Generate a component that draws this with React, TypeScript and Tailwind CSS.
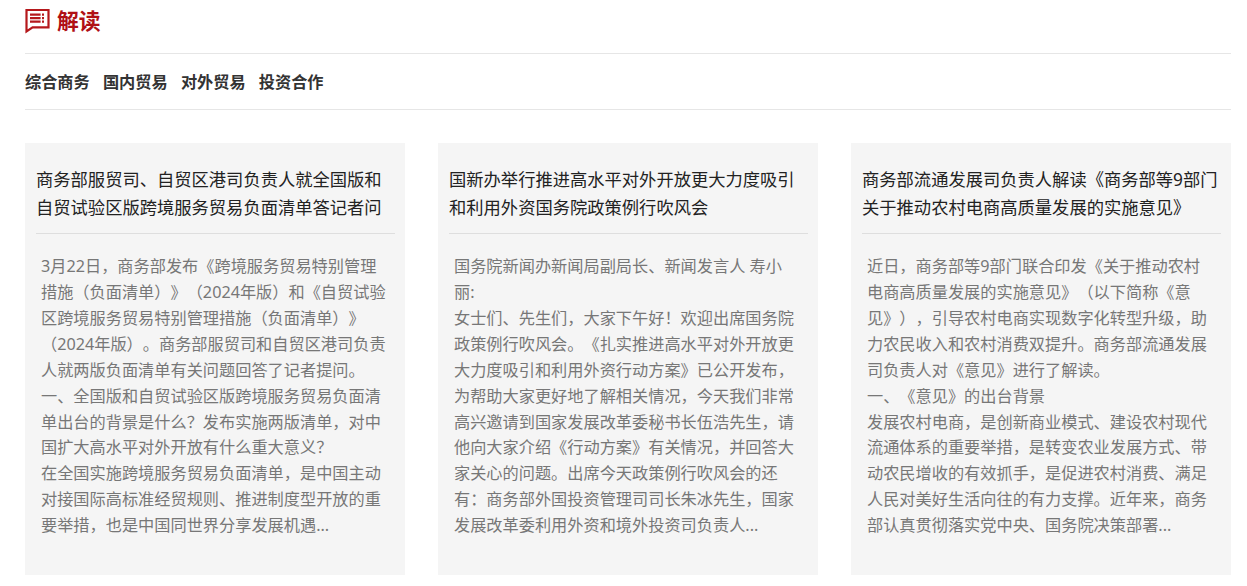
type Article = { title: string[]; lines: string[] };

const tabs = ['综合商务', '国内贸易', '对外贸易', '投资合作'];

const articles: Article[] = [
  {
    title: ['商务部服贸司、自贸区港司负责人就全国版和', '自贸试验区版跨境服务贸易负面清单答记者问'],
    lines: [
      '3月22日，商务部发布《跨境服务贸易特别管理',
      '措施（负面清单）》（2024年版）和《自贸试验',
      '区跨境服务贸易特别管理措施（负面清单）》',
      '（2024年版）。商务部服贸司和自贸区港司负责',
      '人就两版负面清单有关问题回答了记者提问。',
      '一、全国版和自贸试验区版跨境服务贸易负面清',
      '单出台的背景是什么？发布实施两版清单，对中',
      '国扩大高水平对外开放有什么重大意义？',
      '在全国实施跨境服务贸易负面清单，是中国主动',
      '对接国际高标准经贸规则、推进制度型开放的重',
      '要举措，也是中国同世界分享发展机遇...',
    ],
  },
  {
    title: ['国新办举行推进高水平对外开放更大力度吸引', '和利用外资国务院政策例行吹风会'],
    lines: [
      '国务院新闻办新闻局副局长、新闻发言人 寿小',
      '丽:',
      '女士们、先生们，大家下午好！欢迎出席国务院',
      '政策例行吹风会。《扎实推进高水平对外开放更',
      '大力度吸引和利用外资行动方案》已公开发布，',
      '为帮助大家更好地了解相关情况，今天我们非常',
      '高兴邀请到国家发展改革委秘书长伍浩先生，请',
      '他向大家介绍《行动方案》有关情况，并回答大',
      '家关心的问题。出席今天政策例行吹风会的还',
      '有：商务部外国投资管理司司长朱冰先生，国家',
      '发展改革委利用外资和境外投资司负责人...',
    ],
  },
  {
    title: ['商务部流通发展司负责人解读《商务部等9部门', '关于推动农村电商高质量发展的实施意见》'],
    lines: [
      '近日，商务部等9部门联合印发《关于推动农村',
      '电商高质量发展的实施意见》（以下简称《意',
      '见》），引导农村电商实现数字化转型升级，助',
      '力农民收入和农村消费双提升。商务部流通发展',
      '司负责人对《意见》进行了解读。',
      '一、《意见》的出台背景',
      '发展农村电商，是创新商业模式、建设农村现代',
      '流通体系的重要举措，是转变农业发展方式、带',
      '动农民增收的有效抓手，是促进农村消费、满足',
      '人民对美好生活向往的有力支撑。近年来，商务',
      '部认真贯彻落实党中央、国务院决策部署...',
    ],
  },
];

function CommentIcon() {
  return (
    <svg width="26" height="26" viewBox="0 0 26 26" fill="none" stroke="#b5181c">
      <path d="M1.5 2H23.5V19.4H7.6L1.5 23.4Z" strokeWidth="2.2" />
      <path d="M5 6.6H15.6M5 10.1H15.6M5 13.6H15.6" strokeWidth="2.1" />
      <path d="M17 6.6H19M17 10.1H19M17 13.6H19" strokeWidth="2.1" />
    </svg>
  );
}

function ArticleCard({ article }: { article: Article }) {
  return (
    <article className="h-[432px] w-[380px] bg-[#f5f5f5] pt-[23px] pr-2.5 pl-[11px]">
      <h3 className="border-b border-[#dedede] pb-[11px] text-[17.3px] leading-[28px] text-[#222]">
        {article.title.map((line) => (
          <span key={line} className="block">{line}</span>
        ))}
      </h3>
      <p className="pt-5 pl-[5px] text-[16.2px] leading-[25.92px] text-[#777]">
        {article.lines.map((line) => (
          <span key={line} className="block">{line}</span>
        ))}
      </p>
    </article>
  );
}

export default function App() {
  return (
    <main className="h-[586px] w-[1247px] overflow-hidden bg-white pr-4 pl-[25px] font-['Noto_Sans','Noto_Sans_CJK_SC',sans-serif] whitespace-nowrap [text-spacing-trim:space-all]">
      <header className="flex h-[54px] items-start border-b border-[#e6e6e6] pt-2">
        <CommentIcon />
        <h2 className="ml-1.5 text-[21.8px] leading-[26px] font-bold text-[#b01016]">解读</h2>
      </header>
      <nav className="flex h-14 items-center gap-[13.2px] border-b border-[#e6e6e6] pt-px text-[16.2px] font-bold text-[#333]">
        {tabs.map((tab) => (
          <a key={tab}>{tab}</a>
        ))}
      </nav>
      <section className="flex justify-between pt-[33px]">
        {articles.map((article) => (
          <ArticleCard key={article.title[0]} article={article} />
        ))}
      </section>
    </main>
  );
}
